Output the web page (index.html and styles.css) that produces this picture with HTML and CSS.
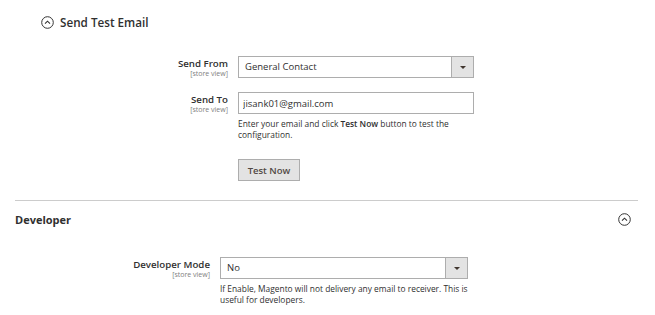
FILE: index.html
```html
<!DOCTYPE html>
<html lang="en">
<head>
    <meta charset="UTF-8">
    <title>Email Settings</title>
    <link rel="stylesheet" href="styles.css">
</head>
<body>

    <div class="page">
        <!-- Send Test Email group -->
        <div class="group">
            <div class="groupTitle">
                <span class="toggle">
                    <svg width="13" height="13" viewBox="0 0 13 13"><circle cx="6.5" cy="6.5" r="5.8" fill="none" stroke="#333" stroke-width="1"/><path d="M4 7.6 L6.5 5.2 L9 7.6" fill="none" stroke="#333" stroke-width="1.1"/></svg>
                </span>
                Send Test Email
            </div>

            <div class="field">
                <div class="label">Send From<span class="scope">[store view]</span></div>
                <div class="control">
                    <div class="select">
                        <span class="selectValue">General Contact</span>
                        <span class="selectArrow"></span>
                    </div>
                </div>
            </div>

            <div class="field">
                <div class="label">Send To<span class="scope">[store view]</span></div>
                <div class="control">
                    <input type="text" class="input" value="jisank01@gmail.com" />
                    <div class="note">Enter your email and click <span class="strong">Test Now</span> button to test the configuration.</div>
                </div>
            </div>

            <div class="field">
                <div class="label"></div>
                <div class="control">
                    <button class="testButton">Test Now</button>
                </div>
            </div>
        </div>

        <!-- Developer section -->
        <div class="section">
            <div class="sectionHead">
                <span>Developer</span>
                <svg width="13" height="13" viewBox="0 0 13 13"><circle cx="6.5" cy="6.5" r="5.8" fill="none" stroke="#333" stroke-width="1"/><path d="M4 7.6 L6.5 5.2 L9 7.6" fill="none" stroke="#333" stroke-width="1.1"/></svg>
            </div>

            <div class="field devField">
                <div class="label">Developer Mode<span class="scope">[store view]</span></div>
                <div class="control">
                    <div class="select">
                        <span class="selectValue">No</span>
                        <span class="selectArrow"></span>
                    </div>
                    <div class="note">If Enable, Magento will not delivery any email to receiver. This is useful for developers.</div>
                </div>
            </div>
        </div>
    </div>

</body>
</html>
```

FILE: styles.css
```css
body {
    margin: 0;
    background-color: #fff;
    font-family: "Open Sans", Arial, sans-serif;
    color: #303030;
}

.page {
    width: 655px;
    height: 315px;
    overflow: hidden;
}

.group {
    padding-top: 14px;
    margin: 0 17px 0 15px;
    border-bottom: 1px solid #cccccc;
    padding-bottom: 5px;
}

.groupTitle {
    display: flex;
    align-items: center;
    gap: 6px;
    padding-left: 26px;
    font-size: 11.7px;
    font-weight: 600;
    color: #303030;
    height: 16px;
    margin-bottom: 26px;
}

.toggle {
    display: flex;
}

.field {
    display: grid;
    grid-template-columns: 213px 236px;
    column-gap: 10px;
    margin-bottom: 14px;
}

.label {
    text-align: right;
    font-size: 9.7px;
    font-weight: 600;
    line-height: 12px;
    padding-top: 2px;
}

.scope {
    display: block;
    font-size: 7px;
    font-weight: 400;
    color: #808080;
    line-height: 8px;
}

.select {
    display: flex;
    height: 22px;
    box-sizing: border-box;
    border: 1px solid #adadad;
    background-color: #fff;
}

.selectValue {
    flex: 1;
    font-size: 9.5px;
    line-height: 20px;
    padding-left: 6px;
}

.selectArrow {
    width: 21px;
    background-color: #e3e3e3;
    border-left: 1px solid #adadad;
    position: relative;
}

.selectArrow::after {
    content: "";
    position: absolute;
    left: 8px;
    top: 9px;
    border-left: 3px solid transparent;
    border-right: 3px solid transparent;
    border-top: 3px solid #41362f;
}

.input {
    display: block;
    width: 100%;
    height: 22px;
    box-sizing: border-box;
    border: 1px solid #adadad;
    padding: 0 4px;
    font-family: "Open Sans", Arial, sans-serif;
    font-size: 9.5px;
    color: #303030;
    margin: 0;
}

.note {
    font-size: 8.4px;
    line-height: 11px;
    margin-top: 4px;
    color: #303030;
}

.strong {
    font-weight: 600;
}

.testButton {
    margin-top: 5px;
    width: 62px;
    height: 22px;
    background-color: #e3e3e3;
    border: 1px solid #adadad;
    font-family: "Open Sans", Arial, sans-serif;
    font-size: 9.5px;
    font-weight: 600;
    color: #514943;
    padding: 0;
    cursor: pointer;
}

.section {
    margin: 0 17px 0 15px;
}

.sectionHead {
    display: flex;
    justify-content: space-between;
    align-items: center;
    margin-top: 10px;
    height: 16px;
    font-size: 11px;
    font-weight: 700;
    padding-right: 7px;
    margin-bottom: 30px;
}

.devField {
    grid-template-columns: 195px 248px;
}
```
